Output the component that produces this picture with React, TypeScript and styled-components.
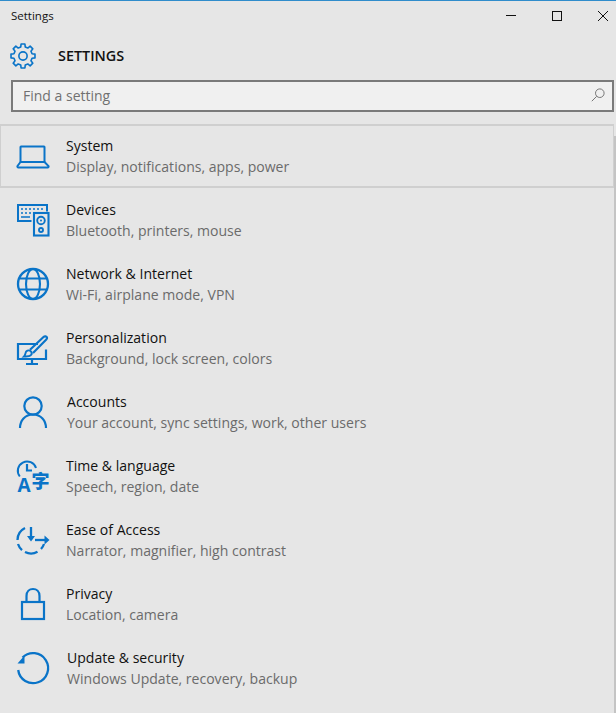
import React from 'react'
import styled, { createGlobalStyle } from 'styled-components'

const BLUE = '#0a74c8'

const GlobalStyle = createGlobalStyle`
  html, body {
    margin: 0;
    padding: 0;
    background: #e6e6e6;
  }
  * {
    box-sizing: border-box;
  }
`

const Window = styled.div`
  position: relative;
  width: 616px;
  height: 713px;
  overflow: hidden;
  background: #e6e6e6;
  border-top: 1px solid #2f8ccb;
  font-family: 'Open Sans', 'Liberation Sans', sans-serif;
`

const TitleBar = styled.div`
  display: flex;
  align-items: center;
  justify-content: space-between;
  height: 30px;
  padding: 0 7px 0 11px;
`

const WindowTitle = styled.div`
  font-size: 11.5px;
  line-height: 28px;
  color: #111;
`

const WindowControls = styled.div`
  display: flex;
  gap: 34px;
`

const ControlSvg = styled.svg`
  display: block;
  width: 12px;
  height: 12px;
`

const Header = styled.div`
  display: flex;
  align-items: center;
  height: 49px;
  padding-left: 10px;
`

const GearSvg = styled.svg`
  display: block;
  width: 26px;
  height: 26px;
`

const Heading = styled.div`
  margin-left: 22px;
  font-size: 14.4px;
  font-weight: 600;
  color: #111;
`

const SearchBox = styled.div`
  display: flex;
  align-items: center;
  justify-content: space-between;
  width: 603px;
  height: 32px;
  margin-left: 11px;
  padding: 0 7px 2px 10px;
  background: #f0f0f0;
  border: 2px solid #7a7a7a;
`

const SearchText = styled.div`
  font-size: 14px;
  color: #707070;
`

const SearchSvg = styled.svg`
  display: block;
  width: 14px;
  height: 14px;
`

const List = styled.div`
  display: flex;
  flex-direction: column;
  margin-top: 12px;
`

const Row = styled.div<{ $selected?: boolean }>`
  display: flex;
  align-items: center;
  width: 614px;
  height: 64px;
  padding-left: 15px;
  border: 2px solid ${(p) => (p.$selected ? '#cfcfcf' : 'transparent')};
  border-left-width: 1px;
  border-right-width: 1px;
`

const IconSlot = styled.div`
  display: flex;
  width: 50px;
`

const IconSvg = styled.svg`
  display: block;
  width: 34px;
  height: 34px;
  overflow: visible;
`

const ZiGlyph = styled.text`
  font-family: 'Noto Sans CJK SC', sans-serif;
  font-size: 18px;
  font-weight: 900;
`

const LatinGlyph = styled.text`
  font-family: 'Open Sans', sans-serif;
  font-size: 19px;
  font-weight: 700;
`

const RowText = styled.div<{ $nudge: number }>`
  display: flex;
  flex-direction: column;
  gap: 1px;
  margin-left: ${(p) => p.$nudge}px;
`

const RowTitle = styled.div`
  font-size: 14.05px;
  line-height: 20px;
  color: #111;
`

const RowSub = styled.div`
  font-size: 14.05px;
  line-height: 20px;
  color: #6b6b6b;
`

const ScrollThumb = styled.div`
  position: absolute;
  top: 135px;
  right: 0;
  width: 2px;
  height: 578px;
  background: #c4c4c4;
`

// 8 teeth, one pointing straight up
const gearPath = () => {
  const pt = (deg: number, r: number) => {
    const a = ((deg - 90) * Math.PI) / 180
    return `${(12 + r * Math.cos(a)).toFixed(2)} ${(12 + r * Math.sin(a)).toFixed(2)}`
  }
  let d = ''
  for (let i = 0; i < 8; i++) {
    const c = i * 45
    d += `${i ? 'L' : 'M'}${pt(c - 14, 8.6)}L${pt(c - 9, 11.2)}L${pt(c + 9, 11.2)}L${pt(c + 14, 8.6)}`
  }
  return d + 'Z'
}

const Icon = ({ children }: { children: React.ReactNode }) => (
  <IconSvg viewBox="0 0 34 34" fill="none" stroke={BLUE} strokeWidth="2">
    {children}
  </IconSvg>
)

const items = [
  {
    title: 'System',
    sub: 'Display, notifications, apps, power',
    selected: true,
    icon: (
      <Icon>
        <path d="M5 7.500h23a.5.5 0 0 1 .5.5v15h-24V8a.5.5 0 0 1 .5-.5Z" strokeWidth="2" />
        <path d="M4.500 23 1.500 27a1 1 0 0 0 .9 1.500h29.200a1 1 0 0 0 .9-1.500L28.500 23" strokeWidth="2" />
      </Icon>
    ),
  },
  {
    title: 'Devices',
    sub: 'Bluetooth, printers, mouse',
    icon: (
      <Icon>
        <path d="M15.500 18H2V2h29v6.500" strokeWidth="2" />
        <path d="M5 6h2M9 6h2M13 6h2M17 6h2M21 6h2M25 6h2M5 10h2M9 10h2M13 10h2M5 14h9" strokeWidth="1.700" />
        <rect x="18" y="10" width="14.500" height="22.500" strokeWidth="2.100" />
        <circle cx="25" cy="17.500" r="3.800" strokeWidth="1.900" />
        <circle cx="25" cy="17.500" r="1" fill={BLUE} stroke="none" />
        <circle cx="25" cy="27" r="2" strokeWidth="1.900" />
      </Icon>
    ),
  },
  {
    title: 'Network & Internet',
    sub: 'Wi-Fi, airplane mode, VPN',
    icon: (
      <Icon>
        <circle cx="17" cy="17" r="15" strokeWidth="2.300" />
        <ellipse cx="17" cy="17" rx="7" ry="15" strokeWidth="2.100" />
        <path d="M3.500 11.500h27M3.500 22.500h27" strokeWidth="2.100" />
      </Icon>
    ),
  },
  {
    title: 'Personalization',
    sub: 'Background, lock screen, colors',
    icon: (
      <Icon>
        <path d="M22 13H2v15h28V18.500" strokeWidth="2.200" />
        <path d="M16 28v4.500M10 33h12" strokeWidth="2.200" />
        <path d="M8 25.500c1.500-1.500 1.200-4 2.500-5.300 1.300-1.200 3.300-1 4.400.1 1.100 1.200.9 2.900-.1 3.900-1.700 1.600-4.500 1.100-6.800 1.300Z" strokeWidth="1.900" />
        <path d="M14 18.800 27.500 6c1.200-1.100 3.200-.8 3.500.5.200.8-.2 1.500-.7 2L17 22" strokeWidth="2.200" />
      </Icon>
    ),
  },
  {
    title: 'Accounts',
    sub: 'Your account, sync settings, work, other users',
    nudge: 1,
    icon: (
      <Icon>
        <circle cx="17" cy="11" r="8.700" strokeWidth="2.200" />
        <path d="M4 33c0-7.500 5-13.500 13-13.500S30 25.500 30 33" strokeWidth="2.200" />
      </Icon>
    ),
  },
  {
    title: 'Time & language',
    sub: 'Speech, region, date',
    icon: (
      <Icon>
        <path d="M3.800 17.500A9.300 9.300 0 1 1 20 9" strokeWidth="2" />
        <path d="M11 5v6.500h5" strokeWidth="2.200" />
        <ZiGlyph x="15.500" y="29" stroke="none" fill={BLUE}>
          字
        </ZiGlyph>
        <LatinGlyph x="1.500" y="33" stroke="none" fill={BLUE}>
          A
        </LatinGlyph>
      </Icon>
    ),
  },
  {
    title: 'Ease of Access',
    sub: 'Narrator, magnifier, high contrast',
    icon: (
      <Icon>
        <path d="M9 5A13.500 13.500 0 0 0 1.500 17M2 21A13.500 13.500 0 0 0 6 27.100M9 29A13.500 13.500 0 0 0 21.500 28.800M25 26A13.500 13.500 0 0 0 28 21" strokeWidth="2.300" />
        <path d="M15 4v13" strokeWidth="2.300" />
        <path d="M11 13l4 5.500 4-5.500Z" fill={BLUE} stroke="none" />
        <path d="M19 17h13" strokeWidth="2.300" />
        <path d="M28.500 12.500 33.500 17l-5 4.500Z" fill={BLUE} stroke="none" />
      </Icon>
    ),
  },
  {
    title: 'Privacy',
    sub: 'Location, camera',
    icon: (
      <Icon>
        <rect x="6" y="15" width="22" height="17" strokeWidth="2.200" />
        <path d="M10.500 15V9C10.500 4.500 13.500 2 17 2S23.500 4.500 23.500 9v6" strokeWidth="2.200" />
      </Icon>
    ),
  },
  {
    title: 'Update & security',
    sub: 'Windows Update, recovery, backup',
    nudge: 1,
    icon: (
      <Icon>
        <path d="M6.500 6.500A15 15 0 1 1 2.200 19" strokeWidth="2.300" />
        <path d="M1.500 12.500 8.500 4.500v8Z" fill={BLUE} stroke="none" />
      </Icon>
    ),
  },
]

export default function App() {
  return (
    <Window>
      <GlobalStyle />
      <TitleBar>
        <WindowTitle>Settings</WindowTitle>
        <WindowControls>
          <ControlSvg viewBox="0 0 12 12" stroke="#111" strokeWidth="1">
            <path d="M1 5.500h10" />
          </ControlSvg>
          <ControlSvg viewBox="0 0 12 12" stroke="#111" strokeWidth="1" fill="none">
            <rect x="1.500" y="1.500" width="9" height="9" />
          </ControlSvg>
          <ControlSvg viewBox="0 0 12 12" stroke="#111" strokeWidth="1">
            <path d="m1 1 10 10M11 1 1 11" />
          </ControlSvg>
        </WindowControls>
      </TitleBar>
      <Header>
        <GearSvg viewBox="0 0 24 24" fill="none" stroke={BLUE} strokeWidth="1.500" strokeLinejoin="round">
          <circle cx="12" cy="12" r="3.800" />
          <path d={gearPath()} />
        </GearSvg>
        <Heading>SETTINGS</Heading>
      </Header>
      <SearchBox>
        <SearchText>Find a setting</SearchText>
        <SearchSvg viewBox="0 0 14 14" fill="none" stroke="#777" strokeWidth="1">
          <circle cx="8.800" cy="5.200" r="4.300" />
          <path d="M5.700 8.300.8 13.200" />
        </SearchSvg>
      </SearchBox>
      <List>
        {items.map((item) => (
          <Row key={item.title} $selected={item.selected}>
            <IconSlot>{item.icon}</IconSlot>
            <RowText $nudge={item.nudge ?? 0}>
              <RowTitle>{item.title}</RowTitle>
              <RowSub>{item.sub}</RowSub>
            </RowText>
          </Row>
        ))}
      </List>
      <ScrollThumb />
    </Window>
  )
}
